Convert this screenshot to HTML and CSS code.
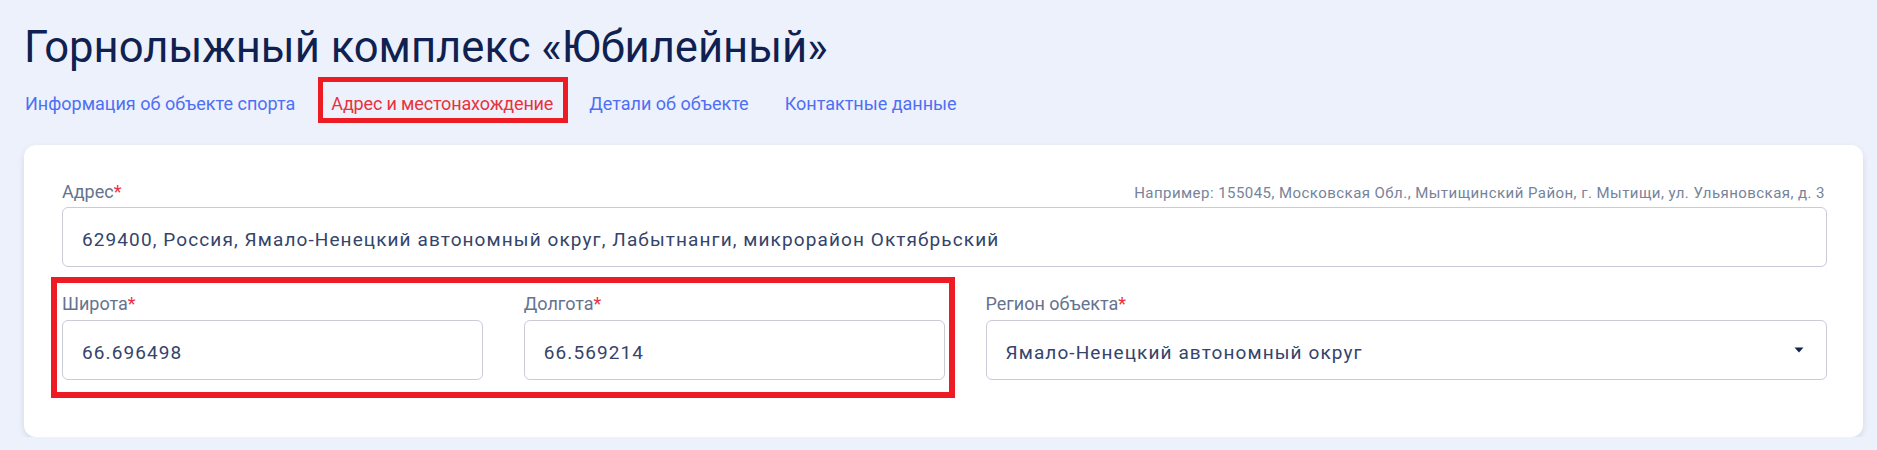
FILE: index.html
```html
<!DOCTYPE html>
<html lang="ru">
<head>
    <meta charset="UTF-8">
    <title>Горнолыжный комплекс «Юбилейный»</title>
    <link rel="stylesheet" href="styles.css">
</head>
<body>
<div class="page">
    <h1 class="page-title">Горнолыжный комплекс «Юбилейный»</h1>

    <nav class="tabs">
        <a href="#info" class="tab">Информация об объекте спорта</a>
        <a href="#address" class="tab tab-active marked">Адрес и местонахождение</a>
        <a href="#details" class="tab">Детали об объекте</a>
        <a href="#contacts" class="tab">Контактные данные</a>
    </nav>

    <div class="card">
        <div class="field">
            <div class="field-head">
                <label for="address" class="field-label">Адрес<span class="req">*</span></label>
                <span class="field-hint">Например: 155045, Московская Обл., Мытищинский Район, г. Мытищи, ул. Ульяновская, д. 3</span>
            </div>
            <input id="address" class="text-input" type="text" value="629400, Россия, Ямало-Ненецкий автономный округ, Лабытнанги, микрорайон Октябрьский">
        </div>

        <div class="field-row">
            <div class="coords marked-wide">
                <div class="field">
                    <label for="lat" class="field-label small-gap">Широта<span class="req">*</span></label>
                    <input id="lat" class="text-input" type="text" value="66.696498">
                </div>
                <div class="field">
                    <label for="lon" class="field-label small-gap">Долгота<span class="req">*</span></label>
                    <input id="lon" class="text-input" type="text" value="66.569214">
                </div>
            </div>
            <div class="field">
                <span class="field-label small-gap">Регион объекта<span class="req">*</span></span>
                <div class="select">
                    <span class="select-value">Ямало-Ненецкий автономный округ</span>
                    <svg class="select-arrow" width="10" height="6" viewBox="0 0 10 6">
                        <path d="M0.5 0.5 L9.5 0.5 L5 5.5 Z" fill="#14234d"/>
                    </svg>
                </div>
            </div>
        </div>
    </div>
</div>
</body>
</html>
```

FILE: styles.css
```css
body {
    margin: 0;
    background-color: #edf1fb;
    font-family: Roboto, "Liberation Sans", sans-serif;
}

.page {
    padding: 0 14px 0 24px;
}

.page-title {
    margin: 22px 0 0;
    font-size: 43.6px;
    line-height: 52px;
    font-weight: 400;
    color: #0f2150;
}

.tabs {
    display: flex;
    gap: 36px;
    margin-top: 18px;
    padding-left: 1px;
}

.tab {
    font-size: 18px;
    line-height: 24px;
    color: #4d6ff5;
    text-decoration: none;
}

.tab-active {
    color: #e8323c;
    letter-spacing: -0.15px;
}

/* red annotation frames */
.marked,
.marked-wide {
    position: relative;
}

.marked::after {
    content: "";
    position: absolute;
    top: -15px;
    bottom: -7px;
    left: -13px;
    right: -15px;
    border: 5px solid #ed1c24;
}

.marked-wide::after {
    content: "";
    position: absolute;
    top: -17px;
    bottom: -18px;
    left: -11px;
    right: -10px;
    border: 6px solid #ed1c24;
    pointer-events: none;
}

.card {
    margin-top: 29px;
    padding: 37px 36px 57px 38px;
    background-color: #fff;
    border-radius: 12px;
    box-shadow: 0 3px 6px rgba(30, 50, 100, 0.12);
}

.field {
    display: flex;
    flex-direction: column;
}

.field-head {
    display: flex;
    justify-content: space-between;
    align-items: baseline;
    margin-bottom: 5px;
}

.field-label {
    font-size: 18px;
    line-height: 20px;
    color: #65738f;
}

.field-label.small-gap {
    margin-bottom: 6px;
}

.req {
    color: #e8323c;
}

.field-hint {
    font-size: 15px;
    letter-spacing: 0.45px;
    color: #76839b;
    margin-right: 2px;
}

.text-input {
    box-sizing: border-box;
    width: 100%;
    height: 60px;
    margin: 0;
    padding: 4px 19px 0;
    border: 1px solid #c9ccd6;
    border-radius: 6px;
    font-family: inherit;
    font-size: 19px;
    letter-spacing: 1.1px;
    color: #34446a;
    background-color: #fff;
    outline: none;
}

.field-row {
    display: grid;
    grid-template-columns: 1fr 1fr 2fr;
    gap: 41px;
    margin-top: 27px;
}

.coords {
    grid-column: span 2;
    display: grid;
    grid-template-columns: 1fr 1fr;
    gap: 41px;
}

.select {
    box-sizing: border-box;
    height: 60px;
    display: flex;
    align-items: center;
    justify-content: space-between;
    padding: 4px 22px 0 19px;
    border: 1px solid #c9ccd6;
    border-radius: 6px;
    font-size: 19px;
    letter-spacing: 1.1px;
    color: #34446a;
}

.select-arrow {
    margin-top: -4px;
}
```
